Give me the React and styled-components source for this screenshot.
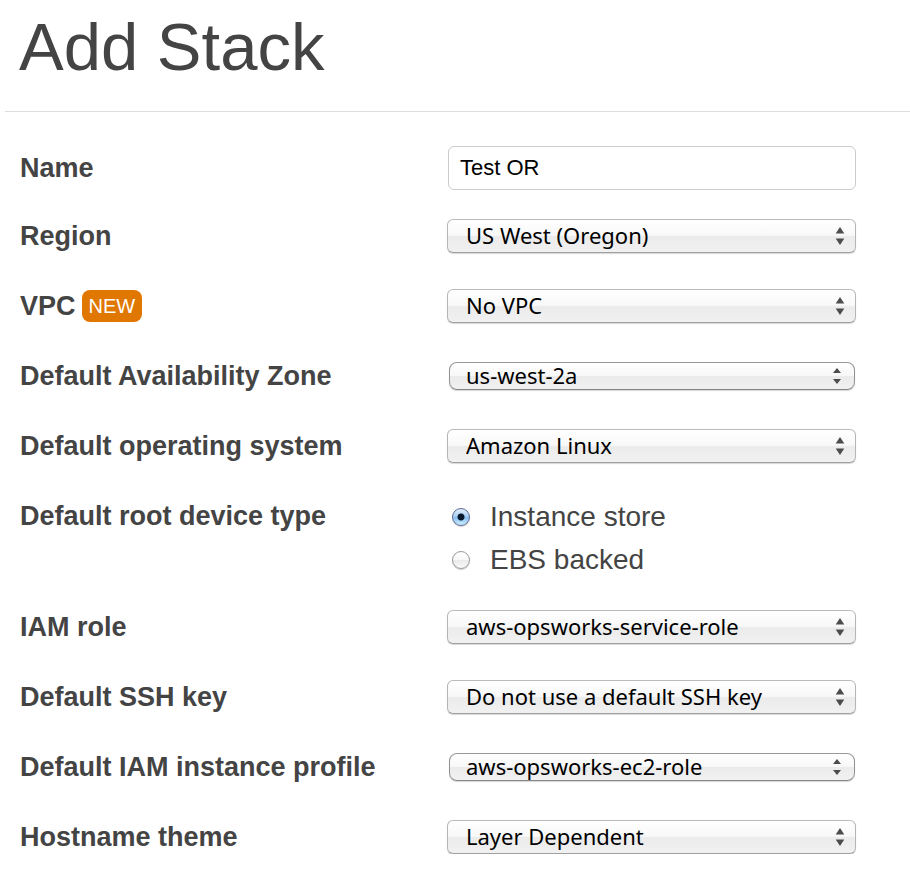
import React, { useState } from "react";
import styled, { createGlobalStyle, css } from "styled-components";

const GlobalStyle = createGlobalStyle`
  *, *::before, *::after { box-sizing: border-box; }
  body {
    margin: 0;
    background: #fff;
    color: #444;
    font-family: "Liberation Sans", Arial, sans-serif;
  }
`;

const Page = styled.main`
  padding-left: 5px;
`;

const Header = styled.header`
  padding: 9px 14px 27px;
  border-bottom: 1px solid #ddd;
`;

const Title = styled.h1`
  margin: 0;
  font-size: 67px;
  line-height: 75px;
  font-weight: 400;
`;

const Form = styled.form`
  padding: 34px 54px 0 15px;
`;

const rowGrid = css`
  display: grid;
  grid-template-columns: 427fr 409fr;
`;

const Row = styled.div`
  ${rowGrid}
  align-items: center;
  min-height: 70px;

  &:last-child {
    min-height: 52px;
    padding-top: 18px;
  }
`;

const NameRow = styled.div`
  ${rowGrid}
  align-items: center;
  padding-bottom: 11px;
`;

const RadioRow = styled.div`
  ${rowGrid}
  align-items: start;
  padding: 14px 0 11px;
`;

const labelText = css`
  font-size: 27px;
  line-height: 34px;
  font-weight: 700;
`;

const Label = styled.label`
  ${labelText}
  display: flex;
  align-items: center;
  gap: 6px;
`;

const GroupLabel = styled.div`
  ${labelText}
  line-height: 43px;
`;

const Badge = styled.span`
  padding: 0 7px;
  border-radius: 8px;
  background: #e07700;
  color: #fff;
  font-size: 20px;
  line-height: 32px;
  font-weight: 400;
`;

const TextInput = styled.input`
  width: calc(100% - 1px);
  height: 44px;
  margin-left: 1px;
  padding: 0 11px;
  border: 1px solid #ccc;
  border-radius: 6px;
  background: #fff;
  color: #000;
  font: 22px "Liberation Sans", Arial, sans-serif;
`;

const SelectBox = styled.div`
  position: relative;
  display: flex;
  align-items: center;
  height: ${(p) => (p.$compact ? 28 : 34)}px;
  margin: ${(p) => (p.$compact ? "0 1px 0 2px" : "0")};
  border: 1px solid;
  border-color: ${(p) =>
    p.$compact ? "#999 #929292 #858585" : "#bbb #b5b5b5 #a0a0a0"};
  border-radius: ${(p) => (p.$compact ? 8 : 6)}px;
  background: linear-gradient(#fff 0%, #f8f8f8 48%, #ebebeb 52%, #f1f1f1 100%);
  box-shadow: 0 1px 1px rgba(0, 0, 0, 0.16);
`;

const Select = styled.select`
  appearance: none;
  flex: 1;
  min-width: 0;
  height: 34px;
  padding: 0 40px 2px ${(p) => (p.$compact ? 16 : 18)}px;
  border: 0;
  border-radius: 6px;
  background: transparent;
  color: #000;
  font: 22px "Noto Sans", "Lucida Grande", sans-serif;
`;

const Arrows = styled.svg`
  position: absolute;
  top: 50%;
  right: ${(p) => (p.$compact ? 13 : 10)}px;
  transform: translateY(-50%);
  fill: #4c4c4c;
  pointer-events: none;
`;

const Options = styled.div`
  display: grid;
`;

const Option = styled.label`
  display: flex;
  align-items: center;
  gap: 20px;
  padding-left: 5px;
  font-size: 28px;
  line-height: 43px;
`;

const Radio = styled.input`
  appearance: none;
  width: 18px;
  height: 18px;
  margin: 0;
  border: 1px solid #999;
  border-radius: 50%;
  background: linear-gradient(#fff, #f8f8f8 48%, #eaeaea 52%, #fafafa);
  box-shadow: 0 1px 1px rgba(0, 0, 0, 0.2);

  &:checked {
    border-color: #5c6c95;
    background:
      radial-gradient(circle, #06182b 3px, transparent 4px),
      linear-gradient(#e3effb, #a5cdf3 48%, #86bdf0 52%, #cdf0ff);
  }
`;

function SelectField({ id, label, badge, value, compact }) {
  return (
    <Row>
      <Label htmlFor={id}>
        {label}
        {badge && <Badge>{badge}</Badge>}
      </Label>
      <SelectBox $compact={compact}>
        <Select id={id} $compact={compact}>
          <option>{value}</option>
        </Select>
        {compact ? (
          <Arrows $compact width="8" height="16" viewBox="0 0 8 16" aria-hidden="true">
            <path d="M4 0 8 5H0zM0 11h8L4 16z" />
          </Arrows>
        ) : (
          <Arrows width="10" height="18" viewBox="0 0 10 18" aria-hidden="true">
            <path d="M5 0 9.3 6.5H.7zM.7 11.5h8.6L5 18z" />
          </Arrows>
        )}
      </SelectBox>
    </Row>
  );
}

const devices = ["Instance store", "EBS backed"];

export default function App() {
  const [name, setName] = useState("Test OR");
  const [device, setDevice] = useState(devices[0]);

  return (
    <Page>
      <GlobalStyle />
      <Header>
        <Title>Add Stack</Title>
      </Header>
      <Form>
        <NameRow>
          <Label htmlFor="name">Name</Label>
          <TextInput id="name" value={name} onChange={(e) => setName(e.target.value)} />
        </NameRow>
        <SelectField id="region" label="Region" value="US West (Oregon)" />
        <SelectField id="vpc" label="VPC" badge="NEW" value="No VPC" />
        <SelectField id="zone" label="Default Availability Zone" value="us-west-2a" compact />
        <SelectField id="os" label="Default operating system" value="Amazon Linux" />
        <RadioRow role="radiogroup" aria-labelledby="device-label">
          <GroupLabel id="device-label">Default root device type</GroupLabel>
          <Options>
            {devices.map((item) => (
              <Option key={item}>
                <Radio
                  type="radio"
                  name="device"
                  checked={device === item}
                  onChange={() => setDevice(item)}
                />
                {item}
              </Option>
            ))}
          </Options>
        </RadioRow>
        <SelectField id="role" label="IAM role" value="aws-opsworks-service-role" />
        <SelectField id="ssh" label="Default SSH key" value="Do not use a default SSH key" />
        <SelectField
          id="profile"
          label="Default IAM instance profile"
          value="aws-opsworks-ec2-role"
          compact
        />
        <SelectField id="theme" label="Hostname theme" value="Layer Dependent" />
      </Form>
    </Page>
  );
}
